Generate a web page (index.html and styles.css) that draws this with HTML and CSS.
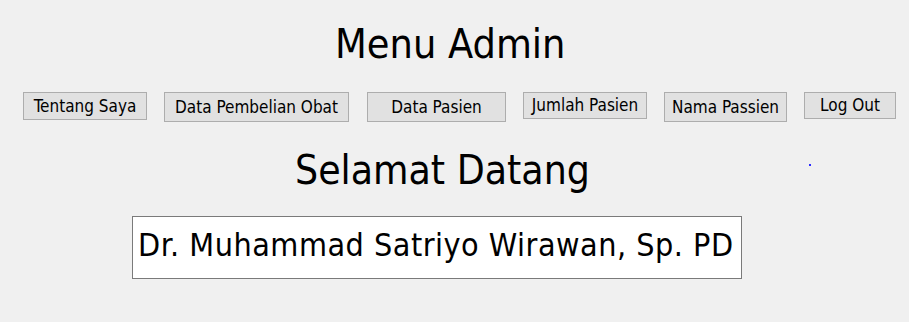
FILE: index.html
```html
<!DOCTYPE html>
<html lang="id">
<head>
  <meta charset="UTF-8">
  <title>Menu Admin</title>
  <link rel="stylesheet" href="styles.css">
</head>
<body>

<div class="frame">
  <h1 class="title">Menu Admin</h1>

  <!-- menu buttons -->
  <div class="menu">
    <button class="btn b-tentang">Tentang Saya</button>
    <button class="btn b-obat tall">Data Pembelian Obat</button>
    <button class="btn b-pasien tall">Data Pasien</button>
    <button class="btn b-jumlah short">Jumlah Pasien</button>
    <button class="btn b-nama tall">Nama Passien</button>
    <button class="btn b-logout short">Log Out</button>
  </div>

  <h2 class="welcome">Selamat Datang</h2>

  <div class="namebox">Dr. Muhammad Satriyo Wirawan, Sp. PD</div>

  <span class="dot"></span>
</div>

</body>
</html>
```

FILE: styles.css
```css
*{box-sizing:border-box}
body{margin:0;padding:0;background:#f0f0f0;font-family:"DejaVu Sans Condensed","DejaVu Sans",sans-serif;color:#000;width:909px;height:322px;overflow:hidden}
.frame{position:relative;display:flex;flex-direction:column;align-items:flex-start;height:322px}
.title{margin:24px 0 0 335px;font-size:41px;line-height:41px;font-weight:normal}
.menu{display:flex;align-items:flex-start;gap:17px;margin:27px 0 0 23px}
.btn{font-family:inherit;font-size:17px;line-height:1;color:#000;background:#e1e1e1;border:1px solid #adadad;border-radius:0;padding:0;height:28px;cursor:pointer}
.btn.tall{height:30px}
.btn.short{height:27px}
.b-tentang{width:124px}
.b-obat{width:185px}
.b-pasien{width:139px;margin-left:1px}
.b-jumlah{width:124px}
.b-nama{width:123px}
.b-logout{width:92px}
.welcome{margin:28px 0 0 295px;font-size:40.5px;line-height:41px;font-weight:normal}
.namebox{margin:25px 0 0 132px;width:610px;height:63px;background:#fff;border:1px solid #7a7a7a;padding:12px 0 0 5px;font-size:32px;line-height:32px;letter-spacing:0.5px;white-space:nowrap}
.dot{position:absolute;left:809px;top:164px;width:2px;height:2px;background:#2c2cff}
```
